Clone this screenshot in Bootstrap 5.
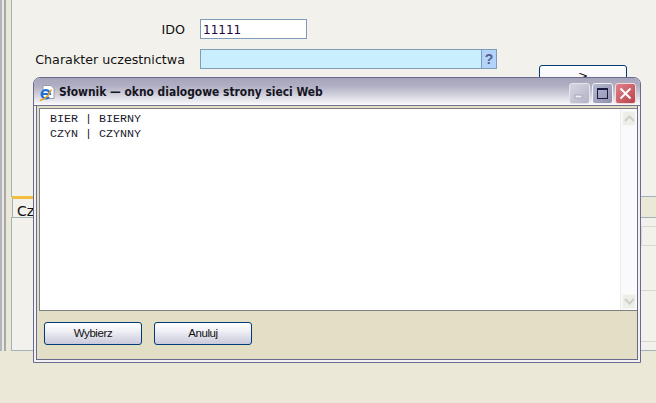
<!DOCTYPE html>
<html lang="pl">
<head>
    <meta charset="UTF-8">
    <meta name="viewport" content="width=device-width, initial-scale=1.0">
    <title>Słownik</title>
    <link href="https://cdn.jsdelivr.net/npm/bootstrap@5.3.3/dist/css/bootstrap.min.css" rel="stylesheet">
    <style>
        html, body { height: 403px; overflow: hidden; }
        body { background: #ebe8d8; font-family: "DejaVu Sans", sans-serif; font-size: 12px; color: #111; position: relative; }

        /* strona pod oknem */
        .page-strip { width: 6px; flex: none; border-left: 2px solid #b5b5b5; border-right: 2px solid #a9a9a9; background: #e8e8e8; }
        .page-main { width: 650px; flex: none; padding-left: 5px; }
        .form-panel { height: 197px; background: #f3f1ec; border-left: 1px solid #9fb3bb; border-bottom: 1px solid #9fb3bb; padding-top: 19px; }
        .form-row-x { display: flex; align-items: center; height: 20px; margin-bottom: 10px; }
        .form-lbl { width: 188px; text-align: right; padding: 1px 15px 0 0; flex: none; font-size: 12.7px; }
        .form-inp { height: 20px; border: 1px solid #7f9db9; background: #fff; color: #1c0a3c; padding: 0 2px; line-height: 20px; }
        .inp-ido { width: 107px; }
        .inp-char { width: 281px; background: #c9effe; border-right: 0; }
        .inp-help { width: 16px; height: 20px; background: #b4d3fb; border: 1px solid #7f9db9; color: #55608a; font-family: "Liberation Sans", sans-serif; font-size: 14px; font-weight: bold; text-align: center; line-height: 18px; }
        .form-next { width: 88px; height: 30px; margin: -14px 0 0 527px; border: 1px solid #003c74; border-radius: 3px; background: linear-gradient(#fff, #ecebf4); text-align: center; line-height: 21px; color: #111; }
        .tab-strip { height: 20px; display: flex; }
        .tab-on { background: #f3f1ec; border-top: 3px solid #f5bd3f; border-left: 1px solid #9fb3bb; margin-left: 1px; font-size: 14px; line-height: 24px; padding: 0 6px 0 4px; margin-top: -1px; height: 21px; }
        .tab-panel { height: 134px; background: #f3f1ec; border: 1px solid #9fb3bb; border-right: 0; }
        .tab-field { height: 20px; margin: 8px 0 44px 629px; border: 1px solid #d8d7d0; border-right: 0; }
        .tab-rule { height: 1px; background: #d8d7d0; margin: 0 0 50px 100px; }

        /* okno dialogowe */
        .ie-window { position: absolute; left: 33px; top: 77px; width: 608px; height: 286px; background: #f2f2f6; border: 1px solid #6a6a8e; border-radius: 7px 7px 0 0; display: flex; flex-direction: column; }
        .ie-title { height: 28px; flex: none; border-radius: 6px 6px 0 0; background: linear-gradient(#a5a4ba 0%, #b0afc3 30%, #d9d9e3 70%, #fbfbfd 100%); border-bottom: 1px solid #74748f; padding: 3px 4px 0 5px; }
        .ie-caption { font-family: "DejaVu Sans Condensed", "DejaVu Sans", sans-serif; font-weight: bold; font-size: 11.9px; color: #15151f; margin-left: 4px; }
        .ie-body { flex: 1; margin: 0 2px 2px; border: 1px solid #6a6a8e; border-top: 0; background: #e2dfc6; padding: 2px 0 0 2px; display: flex; flex-direction: column; }
        .ie-list { height: 203px; flex: none; background: #fff; border: 1px solid #808080; border-right: 0; display: flex; }
        .ie-items { flex: 1; font-family: "Liberation Mono", monospace; font-size: 11.67px; line-height: 15px; color: #1a1a2e; padding: 3px 0 0 10px; white-space: pre; }
        .ie-scroll { width: 17px; flex: none; background: #fafafc; border-left: 1px solid #ecebe6; display: flex; flex-direction: column; justify-content: space-between; padding: 2px 1px 1px 1px; }
        .ie-scroll-btn { height: 15px; background: #eeeee8; border: 1px solid #f7f7f2; border-radius: 2px; display: flex; align-items: center; justify-content: center; }
        .ie-btn-row { padding-top: 11px; padding-left: 5px; gap: 12px; }
        .ie-btn { width: 98px; height: 23px; border: 1px solid #003c74; border-radius: 3px; background: linear-gradient(#fff 0%, #f1f1f6 35%, #c9c9dc 100%); font-family: "Liberation Sans", sans-serif; font-size: 11.5px; letter-spacing: -0.4px; color: #111; padding: 0; }
        .cap-row { gap: 2px; }
        .cap-btn { width: 21px; height: 21px; border-radius: 3px; border: 1px solid #fff; display: flex; align-items: center; justify-content: center; flex: none; }
        .cap-min { background: linear-gradient(135deg, #d6d6e2, #b3b3c6); border-color: #e4e4ec; }
        .cap-max { background: linear-gradient(135deg, #b7b8d0, #8f90ae); border-color: #f0f0f6; }
        .cap-close { background: linear-gradient(135deg, #e0828a, #b9434c); border-color: #f3d9da; }
    </style>
</head>
<body>
    <div class="d-flex">
        <div class="page-strip"></div>
        <div class="page-main">
            <div class="form-panel">
                <div class="form-row-x">
                    <div class="form-lbl">IDO</div>
                    <div class="form-inp inp-ido">11111</div>
                </div>
                <div class="form-row-x">
                    <div class="form-lbl">Charakter uczestnictwa</div>
                    <div class="form-inp inp-char"></div>
                    <div class="inp-help">?</div>
                </div>
                <div class="form-next">&gt;</div>
            </div>
            <div class="tab-strip">
                <div class="tab-on">Czynności</div>
            </div>
            <div class="tab-panel">
                <div class="tab-field"></div>
                <div class="tab-rule"></div>
                <div class="tab-rule"></div>
            </div>
        </div>
    </div>

    <div class="ie-window">
        <div class="ie-title d-flex align-items-center">
            <svg width="16" height="16" viewBox="0 0 16 16">
                <path d="M4 .5h8l3 3v10H4z" fill="#fff" stroke="#9a9aac"/>
                <path d="M3.5 9h7.5a4.2 4.2 0 1 0-1 3" fill="none" stroke="#1f6fd6" stroke-width="2.2"/>
                <path d="M.8 15c2 .8 9-3 11.5-10.5" fill="none" stroke="#e9a31e" stroke-width="1.5"/>
            </svg>
            <span class="ie-caption">Słownik — okno dialogowe strony sieci Web</span>
            <div class="d-flex ms-auto cap-row">
                <div class="cap-btn cap-min">
                    <svg width="11" height="11"><rect x="1" y="7" width="7" height="3" fill="#eeeef4" stroke="#a8a8bc"/></svg>
                </div>
                <div class="cap-btn cap-max">
                    <svg width="11" height="11"><rect x="0.5" y="0.5" width="10" height="10" fill="none" stroke="#1a1a40"/><rect x="0" y="0" width="11" height="2" fill="#1a1a40"/></svg>
                </div>
                <div class="cap-btn cap-close">
                    <svg width="13" height="13"><path d="M1.5 1.5l10 10M11.5 1.5l-10 10" stroke="#fff" stroke-width="2"/></svg>
                </div>
            </div>
        </div>
        <div class="ie-body">
            <div class="ie-list">
                <div class="ie-items">BIER | BIERNY
CZYN | CZYNNY</div>
                <div class="ie-scroll">
                    <div class="ie-scroll-btn"><svg width="11" height="7"><path d="M1 6l4.5-4.5L10 6" fill="none" stroke="#cfcfc8" stroke-width="2"/></svg></div>
                    <div class="ie-scroll-btn"><svg width="11" height="7"><path d="M1 1l4.5 4.5L10 1" fill="none" stroke="#cfcfc8" stroke-width="2"/></svg></div>
                </div>
            </div>
            <div class="d-flex ie-btn-row">
                <button type="button" class="btn ie-btn">Wybierz</button>
                <button type="button" class="btn ie-btn">Anuluj</button>
            </div>
        </div>
    </div>
    <script src="https://cdn.jsdelivr.net/npm/bootstrap@5.3.3/dist/js/bootstrap.bundle.min.js"></script>
</body>
</html>
